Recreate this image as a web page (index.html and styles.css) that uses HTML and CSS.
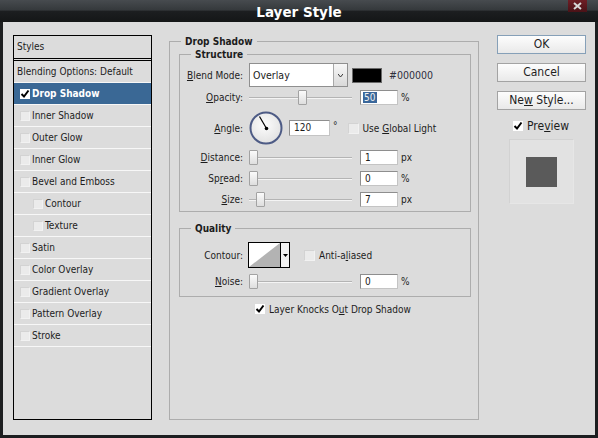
FILE: index.html
```html
<!DOCTYPE html>
<html>
<head>
<meta charset="utf-8">
<link rel="stylesheet" href="styles.css">
</head>
<body>
<div class="window">
  <div class="titlebar">
    <span class="title">Layer Style</span>
    <span class="close"><svg width="9" height="8" viewBox="0 0 9 8"><path d="M1 1 L8 7 M8 1 L1 7" stroke="#d8d8d8" stroke-width="2"/></svg></span>
  </div>
  <div class="main">
    <div class="styles-panel">
      <div class="styles-head">Styles</div>
      <div class="item plain">Blending Options: Default</div>
      <div class="item selected"><span class="cb on"><svg width="10" height="10" viewBox="0 0 10 10"><path d="M1.5 5 L4 7.5 L8.5 1.5" fill="none" stroke="#000" stroke-width="2"/></svg></span>Drop Shadow</div>
      <div class="item"><span class="cb"></span>Inner Shadow</div>
      <div class="item"><span class="cb"></span>Outer Glow</div>
      <div class="item"><span class="cb"></span>Inner Glow</div>
      <div class="item"><span class="cb"></span>Bevel and Emboss</div>
      <div class="item sub"><span class="cb"></span>Contour</div>
      <div class="item sub"><span class="cb"></span>Texture</div>
      <div class="item"><span class="cb"></span>Satin</div>
      <div class="item"><span class="cb"></span>Color Overlay</div>
      <div class="item"><span class="cb"></span>Gradient Overlay</div>
      <div class="item"><span class="cb"></span>Pattern Overlay</div>
      <div class="item"><span class="cb"></span>Stroke</div>
    </div>

    <fieldset class="group outer">
      <legend>Drop Shadow</legend>
      <fieldset class="group structure">
        <legend>Structure</legend>
        <div class="row r-blend">
          <span class="label"><u>B</u>lend Mode:</span>
          <div class="select">
            <span class="select-text">Overlay</span>
            <span class="select-btn"><svg width="5" height="3" viewBox="0 0 5 3"><path d="M0 0 L2.5 3 L5 0" fill="none" stroke="#333" stroke-width="1"/></svg></span>
          </div>
          <span class="swatch"></span>
          <span class="hex">#000000</span>
        </div>
        <div class="row r-opacity">
          <span class="label"><u>O</u>pacity:</span>
          <div class="slider"><span class="thumb" style="left:49px"></span></div>
          <span class="num"><span class="sel">50</span></span>
          <span class="unit">%</span>
        </div>
        <div class="row r-angle">
          <span class="label"><u>A</u>ngle:</span>
          <svg class="dial" width="34" height="34" viewBox="0 0 34 34">
            <defs><radialGradient id="dg" cx="0.45" cy="0.4" r="0.6"><stop offset="0" stop-color="#fdfdfd"/><stop offset="1" stop-color="#e2e2e2"/></radialGradient></defs>
            <circle cx="17" cy="17" r="15.5" fill="url(#dg)" stroke="#4d5b85" stroke-width="2"/>
            <line x1="17.5" y1="17.5" x2="10.5" y2="5.5" stroke="#000" stroke-width="1.2"/>
            <circle cx="17.5" cy="17.5" r="1.8" fill="#000"/>
          </svg>
          <span class="num wide">120</span>
          <span class="deg">°</span>
          <span class="cb mid"></span>
          <span class="cb-text">Use <u>G</u>lobal Light</span>
        </div>
        <div class="row r-dist">
          <span class="label"><u>D</u>istance:</span>
          <div class="slider"><span class="thumb" style="left:0px"></span></div>
          <span class="num">1</span>
          <span class="unit">px</span>
        </div>
        <div class="row r-spread">
          <span class="label">Sp<u>r</u>ead:</span>
          <div class="slider"><span class="thumb" style="left:0px"></span></div>
          <span class="num">0</span>
          <span class="unit">%</span>
        </div>
        <div class="row r-size">
          <span class="label"><u>S</u>ize:</span>
          <div class="slider"><span class="thumb" style="left:7px"></span></div>
          <span class="num">7</span>
          <span class="unit">px</span>
        </div>
      </fieldset>

      <fieldset class="group quality">
        <legend>Quality</legend>
        <div class="row r-contour">
          <span class="label">Contour:</span>
          <div class="contour">
            <svg class="curve" width="31" height="24" viewBox="0 0 31 24"><rect width="31" height="24" fill="#fff"/><polygon points="0,24 31,0 31,24" fill="#b3b3b3"/></svg>
            <span class="contour-btn"><svg width="5" height="3" viewBox="0 0 5 3"><polygon points="0,0 5,0 2.5,3" fill="#000"/></svg></span>
          </div>
          <span class="cb mid aa"></span>
          <span class="cb-text">Anti-a<u>l</u>iased</span>
        </div>
        <div class="row r-noise">
          <span class="label"><u>N</u>oise:</span>
          <div class="slider"><span class="thumb" style="left:0px"></span></div>
          <span class="num">0</span>
          <span class="unit">%</span>
        </div>
      </fieldset>

      <div class="row r-knock">
        <span class="cb on"><svg width="10" height="10" viewBox="0 0 10 10"><path d="M1.5 5 L4 7.5 L8.5 1.5" fill="none" stroke="#000" stroke-width="2"/></svg></span>
        <span class="cb-text">Layer Knocks O<u>u</u>t Drop Shadow</span>
      </div>
    </fieldset>

    <div class="side">
      <div class="btn default">OK</div>
      <div class="btn">Cancel</div>
      <div class="btn">Ne<u>w</u> Style...</div>
      <div class="preview-row">
        <span class="cb on"><svg width="10" height="10" viewBox="0 0 10 10"><path d="M1.5 5 L4 7.5 L8.5 1.5" fill="none" stroke="#000" stroke-width="2"/></svg></span>
        <span class="preview-text">Pre<u>v</u>iew</span>
      </div>
      <div class="preview-box"><span class="preview-square"></span></div>
    </div>
  </div>
</div>
</body>
</html>
```

FILE: styles.css
```css
html, body {
  margin: 0;
  padding: 0;
}
body {
  width: 598px;
  height: 438px;
  overflow: hidden;
  background: #1c1e20;
  font-family: "DejaVu Sans Condensed", "DejaVu Sans", "Liberation Sans", sans-serif;
  font-stretch: condensed;
  font-size: 10px;
  color: #1c1c1c;
}
u { text-decoration: underline; text-underline-offset: 1px; }

.window {
  width: 598px;
  height: 438px;
  display: flex;
  flex-direction: column;
}

.titlebar {
  height: 22px;
  flex: none;
  display: grid;
  grid-template-columns: 1fr auto 1fr;
  align-items: start;
  background: linear-gradient(to bottom, #474b4f 0%, #35393c 45%, #1c1e20 52%, #141617 100%);
}
.title {
  grid-column: 2;
  font-family: "DejaVu Sans", sans-serif;
  font-stretch: normal;
  font-weight: bold;
  font-size: 13.5px;
  color: #fff;
  line-height: 24px;
}
.close {
  grid-column: 3;
  justify-self: end;
  margin-right: 11px;
  width: 19px;
  height: 12px;
  background: linear-gradient(to bottom, #6e1e25, #4a1217);
  display: flex;
  align-items: center;
  justify-content: center;
}

.main {
  flex: 1;
  margin: 0 3px 3px;
  background: #dcdcdc;
  display: flex;
  align-items: flex-start;
  padding: 13px 0 0 10px;
}

/* styles list */
.styles-panel {
  box-sizing: border-box;
  width: 139px;
  height: 385px;
  border: 1px solid #000;
  flex: none;
}
.styles-head {
  height: 22px;
  line-height: 22px;
  padding-left: 3px;
  border-bottom: 3px double #000;
}
.item {
  height: 21px;
  border-bottom: 1px solid #f7f7f7;
  display: flex;
  align-items: center;
  padding-left: 6px;
  white-space: nowrap;
}
.item.plain { padding-left: 3px; }
.item.sub { padding-left: 19px; }
.item.selected {
  background: #3a6895;
  color: #fff;
  font-weight: bold;
}
.cb {
  box-sizing: border-box;
  width: 10px;
  height: 10px;
  flex: none;
  background: #ebebeb;
  border: 1px solid #d3d3d3;
  border-right-color: #f2f2f2;
  border-bottom-color: #f2f2f2;
  margin-right: 2px;
  display: flex;
}
.cb.on {
  background: #fff;
  border-color: #fff;
}
.cb svg { margin: -1px; }

/* group boxes */
.group {
  border: 1px solid #adadad;
  margin: 0;
  padding: 0;
  min-width: 0;
}
.group legend {
  font-weight: bold;
  padding: 0 4px;
  margin-left: 11px;
  line-height: 13px;
}
.outer {
  box-sizing: border-box;
  width: 310px;
  height: 385px;
  margin-left: 17px;
  flex: none;
}
.structure {
  margin: 0 7px 0 9px;
  padding: 0 0 4px 0;
}
.quality {
  margin: 10px 7px 0 9px;
  padding: 0 0 7px 0;
}

.row {
  display: flex;
  align-items: center;
  white-space: nowrap;
}
.label {
  width: 63px;
  margin-right: 6px;
  text-align: right;
  flex: none;
}
.r-blend { margin-top: 2px; height: 24px; }
.r-opacity { margin-top: 2px; height: 16px; }
.r-angle { margin-top: 6px; height: 34px; }
.r-dist { margin-top: 5px; height: 15px; }
.r-spread { margin-top: 6px; height: 15px; }
.r-size { margin-top: 6px; height: 15px; }
.r-contour { margin-top: 7px; height: 26px; }
.r-noise { margin-top: 6px; height: 15px; }
.r-knock { margin-top: 6px; height: 12px; padding-left: 85px; }

.select {
  box-sizing: border-box;
  width: 99px;
  height: 24px;
  display: flex;
  border: 1px solid #8f8f8f;
  background: #fff;
}
.select-text {
  flex: 1;
  padding-left: 3px;
  line-height: 22px;
  font-size: 10.5px;
}
.select-btn {
  width: 13px;
  border-left: 1px solid #a8a8a8;
  background: linear-gradient(to bottom, #f7f7f7, #d9d9d9);
  display: flex;
  align-items: center;
  justify-content: center;
}
.swatch {
  box-sizing: border-box;
  width: 30px;
  height: 15px;
  margin-left: 4px;
  background: #000;
  border: 1px solid #6a6a6a;
}
.hex {
  margin-left: 7px;
  color: #2e2e3c;
  font-size: 10.5px;
}

.slider {
  position: relative;
  width: 103px;
  height: 15px;
  flex: none;
  background: linear-gradient(to bottom, transparent 7px, #b4b4b4 7px, #b4b4b4 8px, #f4f4f4 8px, #f4f4f4 9px, transparent 9px);
}
.thumb {
  position: absolute;
  top: 0;
  box-sizing: border-box;
  width: 9px;
  height: 15px;
  background: linear-gradient(to bottom, #fbfbfb, #dedede);
  border: 1px solid #a2a2a2;
  border-radius: 1px;
}

.num {
  box-sizing: border-box;
  width: 38px;
  height: 15px;
  margin-left: 8px;
  background: #fff;
  border: 1px solid #c4c4c4;
  border-top-color: #8e8e8e;
  border-left-color: #8e8e8e;
  padding-left: 4px;
  line-height: 13px;
  flex: none;
}
.num.wide {
  width: 41px;
  height: 16px;
  margin-left: 6px;
  line-height: 14px;
}
.sel {
  background: #3a679a;
  color: #f0f0f0;
  padding: 0 2px 0 1px;
  margin-left: -2px;
}
.unit { margin-left: 3px; }
.deg {
  margin-left: 3px;
  align-self: flex-start;
  margin-top: 9px;
}
.cb.mid {
  width: 11px;
  height: 11px;
  margin-left: 10px;
  margin-right: 0;
}
.cb.aa { margin-left: 14px; }
.cb-text { margin-left: 4px; }
.r-knock .cb-text { margin-left: 2px; }

.contour {
  box-sizing: border-box;
  width: 42px;
  height: 26px;
  display: flex;
  border: 1px solid #000;
  margin-left: -1px;
  flex: none;
}
.curve { display: block; }
.contour-btn {
  flex: 1;
  border-left: 1px solid #000;
  background: #f2f2f2;
  display: flex;
  align-items: center;
  justify-content: center;
}

/* right side */
.side {
  width: 89px;
  margin-left: 18px;
  flex: none;
  display: flex;
  flex-direction: column;
}
.btn {
  box-sizing: border-box;
  height: 19px;
  margin-bottom: 9px;
  border: 1px solid #a3a3a3;
  background: linear-gradient(to bottom, #fdfdfd, #e9e9e9);
  text-align: center;
  font-size: 12px;
  line-height: 17px;
  color: #1e1e1e;
}
.btn.default {
  border-color: #86a0b8;
}
.preview-row {
  display: flex;
  align-items: center;
  height: 12px;
  margin-top: 1px;
  padding-left: 16px;
  font-size: 12px;
}
.preview-text { margin-left: 2px; }
.preview-box {
  box-sizing: border-box;
  width: 65px;
  height: 65px;
  margin: 7px 0 0 12px;
  background: #e2e2e2;
  border: 1px solid #d2d2d2;
  border-right-color: #e6e6e6;
  border-bottom-color: #e6e6e6;
  display: flex;
  align-items: center;
  justify-content: center;
}
.preview-square {
  width: 31px;
  height: 30px;
  background: #5a5a5a;
}
```
